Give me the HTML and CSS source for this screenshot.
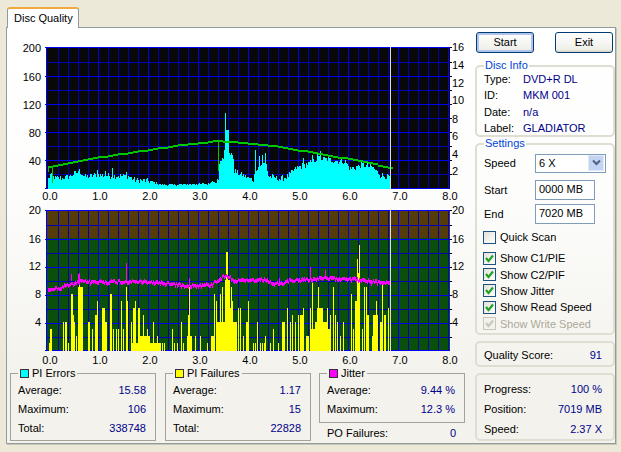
FILE: index.html
```html
<!DOCTYPE html>
<html lang="en">
<head>
<meta charset="utf-8">
<title>Disc Quality</title>
<link rel="stylesheet" href="styles.css">
</head>
<body>
<div class="window">
  <div class="tab">Disc Quality</div>
  <div class="panel">
    <div class="left">
      <svg class="chart" id="top" width="460" height="163" viewBox="8 40 460 163">
        <g id="top-grid" class="crisp"></g>
        <g id="top-data" class="crisp"></g>
        <g class="axis">
          <text class="end" x="41" y="52">200</text><text class="end" x="41" y="81">160</text><text class="end" x="41" y="109">120</text><text class="end" x="41" y="137">80</text><text class="end" x="41" y="165">40</text>
          <text x="452" y="51">16</text><text x="452" y="69">14</text><text x="452" y="87">12</text><text x="452" y="104">10</text><text x="452" y="123">8</text><text x="452" y="140">6</text><text x="452" y="158">4</text><text x="452" y="175">2</text>
          <text class="mid" x="50" y="200">0.0</text><text class="mid" x="100" y="200">1.0</text><text class="mid" x="150" y="200">2.0</text><text class="mid" x="200" y="200">3.0</text><text class="mid" x="250" y="200">4.0</text><text class="mid" x="300" y="200">5.0</text><text class="mid" x="350" y="200">6.0</text><text class="mid" x="400" y="200">7.0</text><text class="mid" x="450" y="200">8.0</text>
        </g>
      </svg>
      <svg class="chart" id="bottom" width="460" height="163" viewBox="8 203 460 163">
        <g id="bottom-grid" class="crisp"></g>
        <g id="bottom-data" class="crisp"></g>
        <g class="axis">
          <text class="end" x="41" y="214">20</text><text class="end" x="41" y="243">16</text><text class="end" x="41" y="270">12</text><text class="end" x="41" y="298">8</text><text class="end" x="41" y="326">4</text>
          <text x="452" y="214">20</text><text x="452" y="243">16</text><text x="452" y="270">12</text><text x="452" y="298">8</text><text x="452" y="326">4</text>
          <text class="mid" x="50" y="364">0.0</text><text class="mid" x="100" y="364">1.0</text><text class="mid" x="150" y="364">2.0</text><text class="mid" x="200" y="364">3.0</text><text class="mid" x="250" y="364">4.0</text><text class="mid" x="300" y="364">5.0</text><text class="mid" x="350" y="364">6.0</text><text class="mid" x="400" y="364">7.0</text><text class="mid" x="450" y="364">8.0</text>
        </g>
      </svg>
      <div class="stats">
        <fieldset class="stat">
          <legend><i class="swatch cyan"></i>PI Errors</legend>
          <div class="row"><span>Average:</span><b>15.58</b></div>
          <div class="row"><span>Maximum:</span><b>106</b></div>
          <div class="row"><span>Total:</span><b>338748</b></div>
        </fieldset>
        <fieldset class="stat">
          <legend><i class="swatch yellow"></i>PI Failures</legend>
          <div class="row"><span>Average:</span><b>1.17</b></div>
          <div class="row"><span>Maximum:</span><b>15</b></div>
          <div class="row"><span>Total:</span><b>22828</b></div>
        </fieldset>
        <div class="jitter-col">
          <fieldset class="stat short">
            <legend><i class="swatch magenta"></i>Jitter</legend>
            <div class="row"><span>Average:</span><b>9.44 %</b></div>
            <div class="row"><span>Maximum:</span><b>12.3 %</b></div>
          </fieldset>
          <div class="row po"><span>PO Failures:</span><b>0</b></div>
        </div>
      </div>
    </div>
    <div class="right">
      <div class="buttons">
        <div class="btn focus">Start</div>
        <div class="btn">Exit</div>
      </div>
      <fieldset class="group info">
        <legend>Disc Info</legend>
        <div class="kv"><span>Type:</span><b>DVD+R DL</b></div>
        <div class="kv"><span>ID:</span><b>MKM 001</b></div>
        <div class="kv"><span>Date:</span><b>n/a</b></div>
        <div class="kv"><span>Label:</span><b>GLADIATOR</b></div>
      </fieldset>
      <fieldset class="group settings">
        <legend>Settings</legend>
        <div class="field">
          <span>Speed</span>
          <div class="select"><span>6 X</span>
            <div class="arrow"><svg width="9" height="7" viewBox="0 0 9 7"><path d="M1 1.5 4.5 5 8 1.5" fill="none" stroke="#4d6185" stroke-width="2"/></svg></div>
          </div>
        </div>
        <div class="field gap"><span>Start</span><div class="input">0000 MB</div></div>
        <div class="field"><span>End</span><div class="input">7020 MB</div></div>
        <div class="check quick"><i class="box"></i>Quick Scan</div>
        <div class="check"><i class="box"><svg width="11" height="11" viewBox="0 0 11 11"><path d="M2 5 4.5 8 9 2.5" fill="none" stroke="#21a121" stroke-width="2.2"/></svg></i>Show C1/PIE</div>
        <div class="check"><i class="box"><svg width="11" height="11" viewBox="0 0 11 11"><path d="M2 5 4.5 8 9 2.5" fill="none" stroke="#21a121" stroke-width="2.2"/></svg></i>Show C2/PIF</div>
        <div class="check"><i class="box"><svg width="11" height="11" viewBox="0 0 11 11"><path d="M2 5 4.5 8 9 2.5" fill="none" stroke="#21a121" stroke-width="2.2"/></svg></i>Show Jitter</div>
        <div class="check"><i class="box"><svg width="11" height="11" viewBox="0 0 11 11"><path d="M2 5 4.5 8 9 2.5" fill="none" stroke="#21a121" stroke-width="2.2"/></svg></i>Show Read Speed</div>
        <div class="check off"><i class="box"><svg width="11" height="11" viewBox="0 0 11 11"><path d="M2 5 4.5 8 9 2.5" fill="none" stroke="#c9c7ba" stroke-width="2.2"/></svg></i>Show Write Speed</div>
      </fieldset>
      <div class="group plain score"><div class="row"><span>Quality Score:</span><b>91</b></div></div>
      <div class="group plain progress">
        <div class="row"><span>Progress:</span><b>100 %</b></div>
        <div class="row"><span>Position:</span><b>7019 MB</b></div>
        <div class="row"><span>Speed:</span><b>2.37 X</b></div>
      </div>
    </div>
  </div>
</div>
<script src="app.js"></script>
</body>
</html>
```
FILE: styles.css
```css
* { box-sizing: border-box; }
html, body { margin: 0; padding: 0; }
body {
  width: 621px; height: 452px; overflow: hidden;
  background: #ece9d8;
  font: 11px "Liberation Sans", Arial, sans-serif;
  color: #000;
}
.window { padding: 7px 0 0 6px; }
.tab {
  width: 72px; height: 21px; margin-left: 1px; margin-bottom: -1px;
  position: relative; z-index: 1;
  background: #fff;
  border: 1px solid #919b9c; border-bottom: 0;
  border-top: 2px solid #f2a93b;
  border-radius: 3px 3px 0 0;
  padding: 3px 0 0 6px;
  white-space: nowrap;
}
.panel {
  width: 610px; height: 417px;
  display: flex;
  border: 1px solid #919b9c;
  box-shadow: 1px 1px 0 #c8c6b8;
  background: linear-gradient(#ffffff 0, #fdfdfc 40%, #f3f2ec 85%, #f3f2ec 100%);
}
.left { width: 467px; padding: 12px 0 0 1px; flex: none; }
.chart { display: block; }
.crisp { shape-rendering: crispEdges; }
.axis text { font: 11px "Liberation Sans", Arial, sans-serif; fill: #000; }
.axis .end { text-anchor: end; }
.axis .mid { text-anchor: middle; }
.stats { display: flex; padding-left: 2px; gap: 9px; margin-top: 1px; }
fieldset { margin: 0; min-width: 0; }
.stat {
  width: 146px; height: 74px;
  border: 1px solid #a3a39a;
  padding: 0 9px 0 7px;
  position: relative;
}
.stat legend { padding: 0 2px; margin-left: 0; height: 13px; line-height: 13px; display: flex; align-items: center; }
.swatch { display: block; width: 9px; height: 9px; border: 1px solid #333; margin-right: 3px; }
.cyan { background: #00ffff; }
.yellow { background: #ffff00; }
.magenta { background: #ff00ff; }
.row { display: flex; justify-content: space-between; line-height: 19px; height: 19px; white-space: nowrap; }
.row b { font-weight: normal; color: #00008b; }
.stat .row:first-of-type { margin-top: 1px; }
.jitter-col { width: 146px; margin-left: -1px; }
.stat.short { height: 56px; }
.po { padding: 0 9px 0 8px; margin-top: 1px; }
.right { width: 140px; padding: 4px 0 0 1px; flex: none; }
.buttons { display: flex; justify-content: space-between; width: 137px; margin-left: 1px; }
.btn {
  width: 58px; height: 21px;
  border: 1px solid #003c74; border-radius: 3px;
  background: linear-gradient(#ffffff, #f0f0ea 85%, #d8d4c6);
  text-align: center; line-height: 18px;
}
.btn.focus { box-shadow: inset 0 0 0 2px #b0c4ec; }
.group {
  width: 140px;
  border: 2px solid #dfded2;
  border-radius: 5px;
  padding: 0 7px;
}
.group legend { color: #0046d5; padding: 0 1px; margin-left: 0; line-height: 13px; height: 13px; }
.info { height: 78px; margin-top: 6px; padding-top: 0; }
.kv { display: flex; height: 16.33px; line-height: 16px; white-space: nowrap; }
.kv:first-of-type { margin-top: -1px; }
.kv span { width: 39px; }
.kv b { font-weight: normal; color: #00008b; }
.settings { height: 198px; margin-top: 0; padding-top: 1px; }
.field { display: flex; align-items: center; height: 24px; }
.field.gap { margin-top: 3px; }
.field > span { width: 51px; }
.select {
  width: 71px; height: 19px;
  border: 1px solid #7f9db9; background: #fff;
  display: flex; justify-content: space-between; align-items: stretch;
  padding: 0 1px 0 3px; line-height: 17px;
}
.arrow {
  width: 16px; margin: 0 0 1px 0;
  background: #c3d4f3; border: 1px solid #e2eafa;
  display: flex; align-items: center; justify-content: center;
}
.input {
  width: 60px; height: 20px;
  border: 1px solid #7f9db9; background: #fff;
  padding-left: 3px; line-height: 17px;
}
.check { display: flex; align-items: center; height: 16.4px; margin-left: -1px; white-space: nowrap; }
.check.quick { margin-top: 3px; margin-bottom: 4.6px; }
.box {
  display: block; width: 13px; height: 13px; margin-right: 4px;
  border: 1px solid #1c5180;
  background: linear-gradient(135deg, #e2e1da, #fff);
  flex: none;
}
.box svg { display: block; }
.check.off { color: #aca899; }
.check.off .box { border-color: #c9c7ba; background: #f3f2ec; }
.plain { margin-top: 6px; padding-right: 11px; }
.score { height: 26px; padding-top: 3px; }
.progress { height: 68px; padding-top: 4px; }
.progress .row { height: 20px; line-height: 20px; }
```
FILE: app.js
```js
var NS = 'http://www.w3.org/2000/svg';
var seed = 12345;
function rnd() { seed = (seed * 1103515245 + 12345) & 0x7fffffff; return seed / 0x7fffffff; }
function rect(g, x, y, w, h, c) {
  var r = document.createElementNS(NS, 'rect');
  r.setAttribute('x', x); r.setAttribute('y', y);
  r.setAttribute('width', w); r.setAttribute('height', h);
  r.setAttribute('fill', c); g.appendChild(r);
}
function interp(pts, x) {
  for (var i = 1; i < pts.length; i++) {
    if (x <= pts[i][0]) {
      var a = pts[i - 1], b = pts[i];
      return a[1] + (b[1] - a[1]) * (x - a[0]) / (b[0] - a[0]);
    }
  }
  return pts[pts.length - 1][1];
}
var MAJOR = '#0000f8', MINOR = '#0000b4';
function grid(g, top, bottom) {
  rect(g, 46, top, 1, bottom - top, MAJOR);
  for (var x = 58; x <= 448; x += 10) {
    rect(g, x, top, 1, bottom - top, (x - 48) % 50 === 0 ? MAJOR : MINOR);
  }
  rect(g, 45, top, 405, 1, MAJOR);
  rect(g, 450, top, 2, 1, '#000');
  var n = 1;
  for (var y = top + 15; y < bottom - 2; y += 14) {
    var major = n % 2 === 0;
    rect(g, major ? 45 : 47, y, major ? 405 : 403, 1, major ? MAJOR : MINOR);
    rect(g, 450, y, 2, 1, '#000');
    n++;
  }
  rect(g, 45, bottom - 1, 405, 1, MAJOR);
}
/* top chart */
var tg = document.getElementById('top-grid');
rect(tg, 47, 47, 403, 142, '#080808');
grid(tg, 47, 189);
var td = document.getElementById('top-data');
var cyan = [[48,9],[50,13],[55,10],[62,10],[70,12],[76,15],[80,16],[85,11],[95,13],[100,13],[108,12],[120,12],[128,12],[135,8],[150,7],[158,4],[170,3],[195,4],[208,4],[212,7],[218,7],[220,26],[224,32],[228,40],[230,33],[233,30],[234,17],[240,14],[248,10],[253,8],[256,20],[262,24],[266,24],[268,12],[280,9],[288,12],[296,20],[310,25],[318,30],[332,28],[345,26],[350,19],[362,23],[372,21],[380,13],[390,11]];
var cyanSp = {219:24,222:30,224:38,225:75,226:58,227:58,228:58,229:35,232:33,105:17,97:18,79:19,112:20,126:16,255:38,265:35,262:33,259:32,303:30,312:33,320:37,317:36};
for (var x = 48; x < 390; x++) {
  var h = cyanSp[x] || Math.max(1, Math.round(interp(cyan, x) + (rnd() - 0.5) * (x > 150 && x < 215 ? 2 : 6)));
  rect(td, x, 188 - h, 1, h + 1, '#00ffff');
}
var gr = [[48,166],[60,164],[80,160],[100,156],[120,153],[140,150],[160,147],[180,144],[200,142],[215,140],[230,141],[260,144],[280,146],[300,150],[320,153],[340,157],[360,160],[380,165],[390,167]];
for (var x2 = 48; x2 < 390; x2 += 5) {
  rect(td, x2, Math.round(interp(gr, x2)), 5, 2, '#00c800');
}
rect(td, 52, 166, 1, 17, '#00c800');
rect(td, 48, 166, 1, 6, '#00c800');
rect(td, 218, 141, 1, 30, '#00c800');
rect(td, 390, 47, 1, 142, '#dddddd');
/* bottom chart */
var bg = document.getElementById('bottom-grid');
rect(bg, 47, 210, 403, 28, '#553a0a');
rect(bg, 47, 238, 403, 113, '#0a4f0a');
grid(bg, 210, 351);
var bd = document.getElementById('bottom-data');
var yel = [[49,3,7],[50,2,21],[63,1,28],[65,2,28],[68,1,7],[71,2,56],[73,1,35],[74,1,28],[76,1,14],[78,5,63],[79,1,77],[88,2,28],[92,1,21],[95,2,35],[97,1,49],[102,3,42],[105,2,28],[110,2,56],[113,1,21],[116,1,21],[118,1,21],[121,1,49],[123,1,21],[126,1,63],[127,1,49],[131,1,28],[133,3,42],[135,1,49],[138,2,42],[143,1,35],[147,1,21],[153,1,28],[157,1,14],[132,28,7],[140,10,14],[160,1,7],[162,1,7],[164,1,7],[172,1,21],[174,1,7],[177,1,7],[181,1,28],[183,1,7],[187,1,14],[188,1,35],[189,1,63],[190,2,14],[195,1,14],[200,1,14],[207,1,7],[211,3,14],[214,1,56],[216,1,49],[217,10,28],[220,1,56],[222,1,63],[225,5,70],[226,2,98],[230,1,42],[232,1,49],[233,4,28],[231,1,63],[235,1,28],[238,1,42],[240,1,42],[243,1,14],[246,3,28],[248,1,49],[253,1,7],[255,1,7],[257,1,28],[260,1,7],[262,1,7],[264,1,7],[265,1,14],[270,1,7],[273,1,21],[278,1,7],[282,3,28],[287,1,42],[290,1,28],[292,1,35],[295,1,28],[298,1,35],[300,3,35],[303,1,42],[306,3,14],[310,1,42],[312,1,70],[311,20,21],[315,12,28],[318,1,63],[317,6,42],[327,1,42],[330,1,35],[333,1,63],[335,1,35],[337,1,28],[340,1,14],[343,1,28],[351,1,56],[353,1,21],[355,5,49],[357,1,91],[358,1,77],[359,1,105],[362,1,21],[364,1,63],[366,1,63],[367,2,35],[372,1,14],[373,5,35],[376,1,49],[380,2,28],[382,1,66],[384,2,35],[388,1,42]];
yel.forEach(function (b) { rect(bd, b[0], 350 - b[2], b[1], b[2] + 1, '#ffff00'); });
var ji = [[48,288],[58,288],[65,285],[72,284],[80,281],[100,281.5],[130,281],[160,282],[185,285],[210,284.5],[220,278],[226,275],[235,280],[260,280],[265,279],[270,282],[280,284],[290,280],[320,278],[350,278],[370,281],[390,282]];
for (var x3 = 48; x3 < 390; x3++) {
  var y = interp(ji, x3) + (rnd() - 0.5) * 3;
  rect(bd, x3, Math.round(y) - 1, 1, 3 + Math.round(rnd()), '#ff00ff');
}
[[126,263,17],[79,273,8],[78,274,6],[310,267,12],[325,270,9],[189,278,5],[71,274,7],[279,278,6],[371,280,6]].forEach(function (s) {
  rect(bd, s[0], s[1], 1, s[2], '#ff00ff');
});
rect(bd, 390, 210, 1, 141, '#dddddd');
```
